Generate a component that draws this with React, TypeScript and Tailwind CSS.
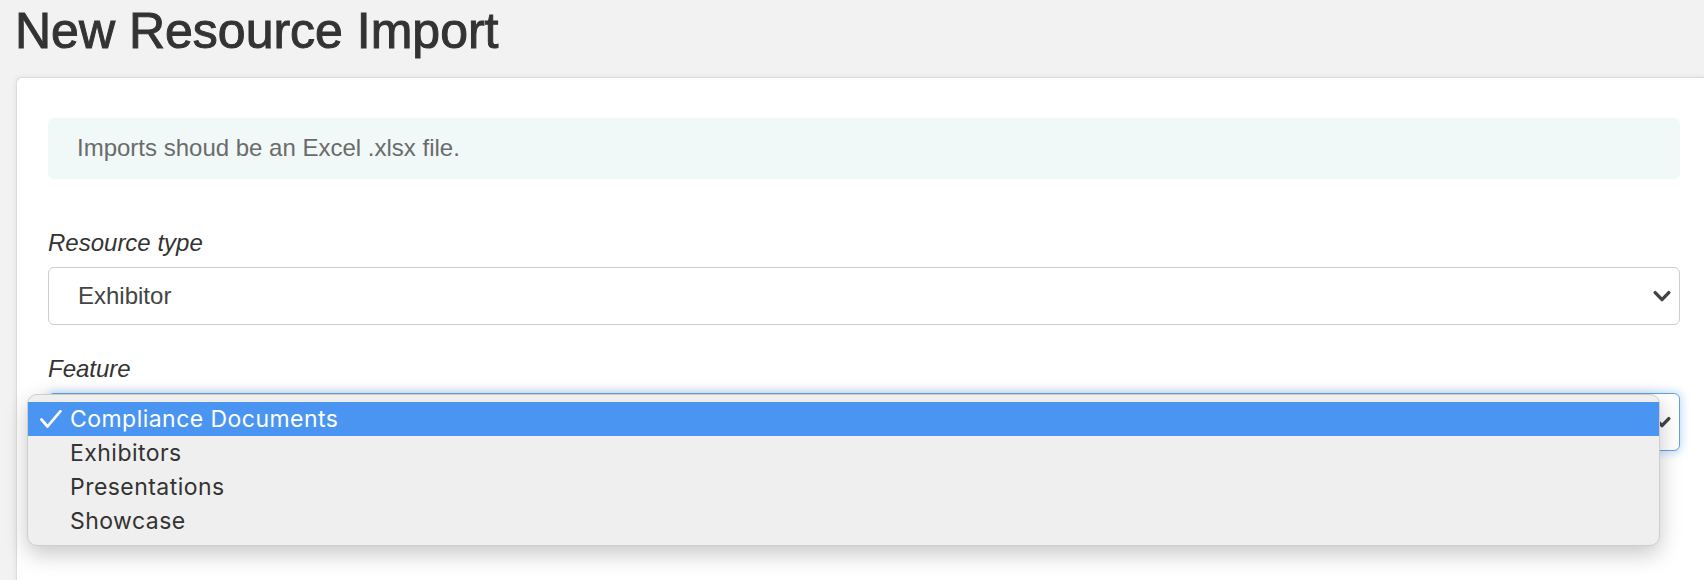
import React from "react";

const ChevronDown = () => (
  <svg width="18" height="13" viewBox="0 0 18 13" fill="none">
    <path d="M2.2 2.6L9 9.6L15.8 2.6" stroke="#444" strokeWidth="3.4" strokeLinecap="round" strokeLinejoin="round" />
  </svg>
);

const CheckMark = () => (
  <svg width="22" height="18" viewBox="0 0 22 18" fill="none">
    <path d="M1.5 9.5L7.5 16.5L20.5 1.2" stroke="white" strokeWidth="2.7" strokeLinecap="round" strokeLinejoin="round" />
  </svg>
);

interface SelectBoxProps {
  value: string;
  focused?: boolean;
}

const SelectBox = ({ value, focused }: SelectBoxProps) => (
  <div
    className={
      focused
        ? "flex h-[58px] items-center justify-between rounded-[6px] border border-[#5fa2e6] bg-white pl-[29px] pr-[8px] shadow-[0_0_9px_2px_rgba(90,160,235,0.35)]"
        : "flex h-[58px] items-center justify-between rounded-[6px] border border-[#cdcdcd] bg-white pl-[29px] pr-[8px]"
    }
  >
    <span className="text-[24px] leading-[36px] text-[#444]">{value}</span>
    <ChevronDown />
  </div>
);

const options = ["Compliance Documents", "Exhibitors", "Presentations", "Showcase"];

// native select menu, open over the Feature field
const OptionsMenu = () => (
  <div className="absolute left-[-21px] top-[1px] w-[1633px] rounded-[10px] border border-[#cdcdcd] bg-[#efefef] py-[7px] shadow-[0_8px_22px_rgba(0,0,0,0.22)]">
    {options.map((opt, i) => (
      <div
        key={opt}
        className={
          i === 0
            ? "relative flex h-[34px] items-center bg-[#4b95f2] pl-[42px] font-['Inter',sans-serif] text-[23px] tracking-[0.02em] text-white"
            : "relative flex h-[34px] items-center pl-[42px] font-['Inter',sans-serif] text-[23px] tracking-[0.02em] text-[#333]"
        }
      >
        {i === 0 && (
          <span className="absolute left-[12px] top-[8px]">
            <CheckMark />
          </span>
        )}
        {opt}
      </div>
    ))}
  </div>
);

export default function App() {
  return (
    <div className="h-[580px] overflow-hidden bg-[#f2f2f2] font-['Liberation_Sans',Arial,sans-serif] text-[#333]">
      <h1 className="pl-[15px] pt-[6px] text-[50px] font-medium leading-[50px] text-[#333] [-webkit-text-stroke:1px_#333]">
        New Resource Import
      </h1>

      <div className="ml-[16px] mt-[21px] rounded-l-[6px] border border-r-0 border-[#dcdcdc] bg-white pb-[200px] pl-[31px] pr-[24px] pt-[40px] shadow-[0_0_6px_rgba(0,0,0,0.08)]">
        <div className="rounded-[6px] bg-[#f0f9f8] pb-[13px] pl-[29px] pt-[12px] text-[24px] leading-[36px] text-[#6b6b6b]">
          Imports shoud be an Excel .xlsx file.
        </div>

        <label className="mb-[6px] mt-[46px] block text-[24px] italic leading-[36px] text-[#333]">Resource type</label>
        <SelectBox value="Exhibitor" />

        <label className="mb-[6px] mt-[26px] block text-[24px] italic leading-[36px] text-[#333]">Feature</label>
        <div className="relative">
          <SelectBox value="" focused />
          <OptionsMenu />
        </div>
      </div>
    </div>
  );
}
